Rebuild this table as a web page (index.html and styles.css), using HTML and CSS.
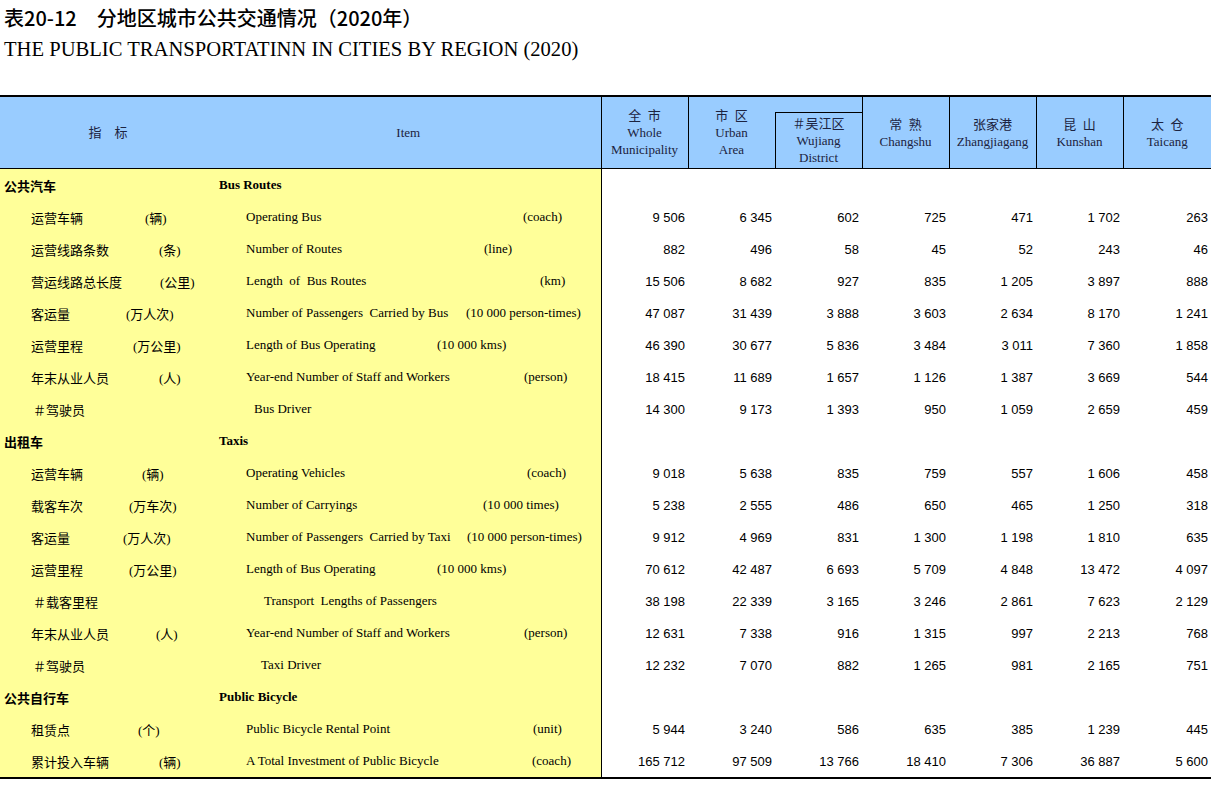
FILE: index.html
```html
<!DOCTYPE html>
<html lang="zh-CN">
<head>
<meta charset="utf-8">
<title>表20-12 分地区城市公共交通情况(2020年)</title>
<link rel="stylesheet" href="styles.css">
</head>
<body>
<header class="head">
  <h1 class="title-cn">表20-12　分地区城市公共交通情况（2020年）</h1>
  <h2 class="title-en">THE PUBLIC TRANSPORTATINN IN CITIES BY REGION (2020)</h2>
</header>
<table class="tbl">
  <colgroup>
    <col class="c-cn"><col class="c-en">
    <col class="c-num"><col class="c-num"><col class="c-num"><col class="c-num"><col class="c-num"><col class="c-num"><col class="c-last">
  </colgroup>
  <thead>
    <tr class="h1">
      <th class="h-cn" rowspan="2">指　标</th>
      <th class="h-en" rowspan="2">Item</th>
      <th class="h-num" rowspan="2">全&ensp;市<br>Whole<br>Municipality</th>
      <th class="h-num h-urban" rowspan="2">市&ensp;区<br>Urban<br>Area</th>
      <th class="h-num h-gap"></th>
      <th class="h-num" rowspan="2">常&ensp;熟<br>Changshu</th>
      <th class="h-num" rowspan="2">张家港<br>Zhangjiagang</th>
      <th class="h-num" rowspan="2">昆&ensp;山<br>Kunshan</th>
      <th class="h-num h-end" rowspan="2">太&ensp;仓<br>Taicang</th>
    </tr>
    <tr class="h2">
      <th class="h-num h-wj">＃吴江区<br>Wujiang<br>District</th>
    </tr>
  </thead>
  <tbody>
    <tr class="sec">
      <td class="cn"><div class="lab"><span class="nm">公共汽车</span></div></td>
      <td class="en"><div class="lab"><span class="nm">Bus Routes</span></div></td>
      <td></td><td></td><td></td><td></td><td></td><td></td><td></td>
    </tr>
    <tr class="b1">
      <td class="cn"><div class="lab"><span class="nm">运营车辆</span><span class="cu">(辆)</span></div></td>
      <td class="en"><div class="lab"><span class="nm">Operating Bus</span><span class="eu">(coach)</span></div></td>
      <td>9 506</td><td>6 345</td><td>602</td><td>725</td><td>471</td><td>1 702</td><td>263</td>
    </tr>
    <tr class="b2">
      <td class="cn"><div class="lab"><span class="nm">运营线路条数</span><span class="cu">(条)</span></div></td>
      <td class="en"><div class="lab"><span class="nm">Number of Routes</span><span class="eu">(line)</span></div></td>
      <td>882</td><td>496</td><td>58</td><td>45</td><td>52</td><td>243</td><td>46</td>
    </tr>
    <tr class="b3">
      <td class="cn"><div class="lab"><span class="nm">营运线路总长度</span><span class="cu">(公里)</span></div></td>
      <td class="en"><div class="lab"><span class="nm">Length  of  Bus Routes</span><span class="eu">(km)</span></div></td>
      <td>15 506</td><td>8 682</td><td>927</td><td>835</td><td>1 205</td><td>3 897</td><td>888</td>
    </tr>
    <tr class="b4">
      <td class="cn"><div class="lab"><span class="nm">客运量</span><span class="cu">(万人次)</span></div></td>
      <td class="en"><div class="lab"><span class="nm">Number of Passengers  Carried by Bus</span><span class="eu">(10 000 person-times)</span></div></td>
      <td>47 087</td><td>31 439</td><td>3 888</td><td>3 603</td><td>2 634</td><td>8 170</td><td>1 241</td>
    </tr>
    <tr class="b5">
      <td class="cn"><div class="lab"><span class="nm">运营里程</span><span class="cu">(万公里)</span></div></td>
      <td class="en"><div class="lab"><span class="nm">Length of Bus Operating</span><span class="eu">(10 000 kms)</span></div></td>
      <td>46 390</td><td>30 677</td><td>5 836</td><td>3 484</td><td>3 011</td><td>7 360</td><td>1 858</td>
    </tr>
    <tr class="b6">
      <td class="cn"><div class="lab"><span class="nm">年末从业人员</span><span class="cu">(人)</span></div></td>
      <td class="en"><div class="lab"><span class="nm">Year-end Number of Staff and Workers</span><span class="eu">(person)</span></div></td>
      <td>18 415</td><td>11 689</td><td>1 657</td><td>1 126</td><td>1 387</td><td>3 669</td><td>544</td>
    </tr>
    <tr class="sub b7">
      <td class="cn"><div class="lab"><span class="nm">＃驾驶员</span></div></td>
      <td class="en"><div class="lab"><span class="nm">Bus Driver</span></div></td>
      <td>14 300</td><td>9 173</td><td>1 393</td><td>950</td><td>1 059</td><td>2 659</td><td>459</td>
    </tr>
    <tr class="sec">
      <td class="cn"><div class="lab"><span class="nm">出租车</span></div></td>
      <td class="en"><div class="lab"><span class="nm">Taxis</span></div></td>
      <td></td><td></td><td></td><td></td><td></td><td></td><td></td>
    </tr>
    <tr class="t1">
      <td class="cn"><div class="lab"><span class="nm">运营车辆</span><span class="cu">(辆)</span></div></td>
      <td class="en"><div class="lab"><span class="nm">Operating Vehicles</span><span class="eu">(coach)</span></div></td>
      <td>9 018</td><td>5 638</td><td>835</td><td>759</td><td>557</td><td>1 606</td><td>458</td>
    </tr>
    <tr class="t2">
      <td class="cn"><div class="lab"><span class="nm">载客车次</span><span class="cu">(万车次)</span></div></td>
      <td class="en"><div class="lab"><span class="nm">Number of Carryings</span><span class="eu">(10 000 times)</span></div></td>
      <td>5 238</td><td>2 555</td><td>486</td><td>650</td><td>465</td><td>1 250</td><td>318</td>
    </tr>
    <tr class="t3">
      <td class="cn"><div class="lab"><span class="nm">客运量</span><span class="cu">(万人次)</span></div></td>
      <td class="en"><div class="lab"><span class="nm">Number of Passengers  Carried by Taxi</span><span class="eu">(10 000 person-times)</span></div></td>
      <td>9 912</td><td>4 969</td><td>831</td><td>1 300</td><td>1 198</td><td>1 810</td><td>635</td>
    </tr>
    <tr class="t4">
      <td class="cn"><div class="lab"><span class="nm">运营里程</span><span class="cu">(万公里)</span></div></td>
      <td class="en"><div class="lab"><span class="nm">Length of Bus Operating</span><span class="eu">(10 000 kms)</span></div></td>
      <td>70 612</td><td>42 487</td><td>6 693</td><td>5 709</td><td>4 848</td><td>13 472</td><td>4 097</td>
    </tr>
    <tr class="sub t5">
      <td class="cn"><div class="lab"><span class="nm">＃载客里程</span></div></td>
      <td class="en"><div class="lab"><span class="nm">Transport  Lengths of Passengers</span></div></td>
      <td>38 198</td><td>22 339</td><td>3 165</td><td>3 246</td><td>2 861</td><td>7 623</td><td>2 129</td>
    </tr>
    <tr class="t6">
      <td class="cn"><div class="lab"><span class="nm">年末从业人员</span><span class="cu">(人)</span></div></td>
      <td class="en"><div class="lab"><span class="nm">Year-end Number of Staff and Workers</span><span class="eu">(person)</span></div></td>
      <td>12 631</td><td>7 338</td><td>916</td><td>1 315</td><td>997</td><td>2 213</td><td>768</td>
    </tr>
    <tr class="sub t7">
      <td class="cn"><div class="lab"><span class="nm">＃驾驶员</span></div></td>
      <td class="en"><div class="lab"><span class="nm">Taxi Driver</span></div></td>
      <td>12 232</td><td>7 070</td><td>882</td><td>1 265</td><td>981</td><td>2 165</td><td>751</td>
    </tr>
    <tr class="sec">
      <td class="cn"><div class="lab"><span class="nm">公共自行车</span></div></td>
      <td class="en"><div class="lab"><span class="nm">Public Bicycle</span></div></td>
      <td></td><td></td><td></td><td></td><td></td><td></td><td></td>
    </tr>
    <tr class="p1">
      <td class="cn"><div class="lab"><span class="nm">租赁点</span><span class="cu">(个)</span></div></td>
      <td class="en"><div class="lab"><span class="nm">Public Bicycle Rental Point</span><span class="eu">(unit)</span></div></td>
      <td>5 944</td><td>3 240</td><td>586</td><td>635</td><td>385</td><td>1 239</td><td>445</td>
    </tr>
    <tr class="p2">
      <td class="cn"><div class="lab"><span class="nm">累计投入车辆</span><span class="cu">(辆)</span></div></td>
      <td class="en"><div class="lab"><span class="nm">A Total Investment of Public Bicycle</span><span class="eu">(coach)</span></div></td>
      <td>165 712</td><td>97 509</td><td>13 766</td><td>18 410</td><td>7 306</td><td>36 887</td><td>5 600</td>
    </tr>
  </tbody>
</table>
</body>
</html>
```

FILE: styles.css
```css
html, body {
  margin: 0;
  padding: 0;
  background: #ffffff;
}

body {
  color: #000;
  font-family: "Liberation Serif", "Noto Sans CJK SC", serif;
  width: 1211px;
}

.head {
  padding: 4px 0 0 4px;
}

.title-cn {
  margin: 0;
  font-family: "Noto Sans CJK SC", sans-serif;
  font-size: 20px;
  font-weight: 500;
  line-height: 28px;
}

.title-en {
  margin: 4px 0 0 0;
  font-family: "Liberation Serif", serif;
  font-size: 20.6px;
  font-weight: normal;
  line-height: 26px;
}

.tbl {
  margin-top: 33px;
  width: 1211px;
  border-collapse: collapse;
  table-layout: fixed;
}

.c-cn { width: 216px; }
.c-en { width: 385px; }
.c-num { width: 87px; }
.c-last { width: 88px; }

/* header */
.tbl th {
  padding: 0;
  background: #99ccff;
  color: #1c2340;
  font-family: "Liberation Serif", "Noto Sans CJK SC", serif;
  font-size: 13px;
  font-weight: normal;
  line-height: 17px;
  text-align: center;
  vertical-align: middle;
  border-bottom: 1px solid #000;
}

.h1 th {
  border-top: 2px solid #000;
}

.h1 th.h-gap {
  height: 15px;
  border-left: none;
  border-bottom: 1px solid #000;
}

.h2 th {
  height: 55px;
}

.h-en {
  border-right: 1px solid #000;
}

.h-num {
  border-right: 1px solid #000;
}

.h-num.h-urban {
  border-right: none;
}

.h-num.h-end {
  border-right: none;
}

.h-wj {
  border-left: 1px solid #000;
  border-right: 1px solid #000;
}

/* body */
.tbl td {
  height: 32px;
  padding: 0 3px 0 0;
  font-family: "Liberation Sans", sans-serif;
  font-size: 13px;
  text-align: right;
  vertical-align: middle;
  white-space: nowrap;
}

.tbl td.cn,
.tbl td.en {
  padding: 0;
  background: #ffff99;
  font-family: "Liberation Serif", "Noto Sans CJK SC", serif;
  text-align: left;
}

.tbl td.en {
  border-right: 1px solid #000;
}

.tbl tbody tr:last-child td {
  border-bottom: 2px solid #000;
}

.lab {
  display: grid;
  align-items: center;
}

.lab > span {
  grid-area: 1 / 1;
  justify-self: start;
  white-space: pre;
}

.cn .nm { margin-left: 31px; }
.en .nm { margin-left: 30px; }

.sec .nm { font-weight: bold; }
.sec .cn .nm { margin-left: 4px; }
.sec .en .nm { margin-left: 3px; }

.sub .cn .nm { margin-left: 33px; }

/* unit offsets, as spaced in the source table */
.b1 .cu { margin-left: 145px; }
.b1 .eu { margin-left: 307px; }
.b2 .cu { margin-left: 159px; }
.b2 .eu { margin-left: 268px; }
.b3 .cu { margin-left: 160px; }
.b3 .eu { margin-left: 324px; }
.b4 .cu { margin-left: 126px; }
.b4 .eu { margin-left: 250px; }
.b5 .cu { margin-left: 133px; }
.b5 .eu { margin-left: 221px; }
.b6 .cu { margin-left: 159px; }
.b6 .eu { margin-left: 308px; }
.b7 .en .nm { margin-left: 38px; }

.t1 .cu { margin-left: 142px; }
.t1 .eu { margin-left: 311px; }
.t2 .cu { margin-left: 129px; }
.t2 .eu { margin-left: 267px; }
.t3 .cu { margin-left: 123px; }
.t3 .eu { margin-left: 251px; }
.t4 .cu { margin-left: 129px; }
.t4 .eu { margin-left: 221px; }
.t5 .en .nm { margin-left: 48px; }
.t6 .cu { margin-left: 156px; }
.t6 .eu { margin-left: 308px; }
.t7 .en .nm { margin-left: 45px; }

.p1 .cu { margin-left: 138px; }
.p1 .eu { margin-left: 317px; }
.p2 .cu { margin-left: 159px; }
.p2 .eu { margin-left: 316px; }
```
